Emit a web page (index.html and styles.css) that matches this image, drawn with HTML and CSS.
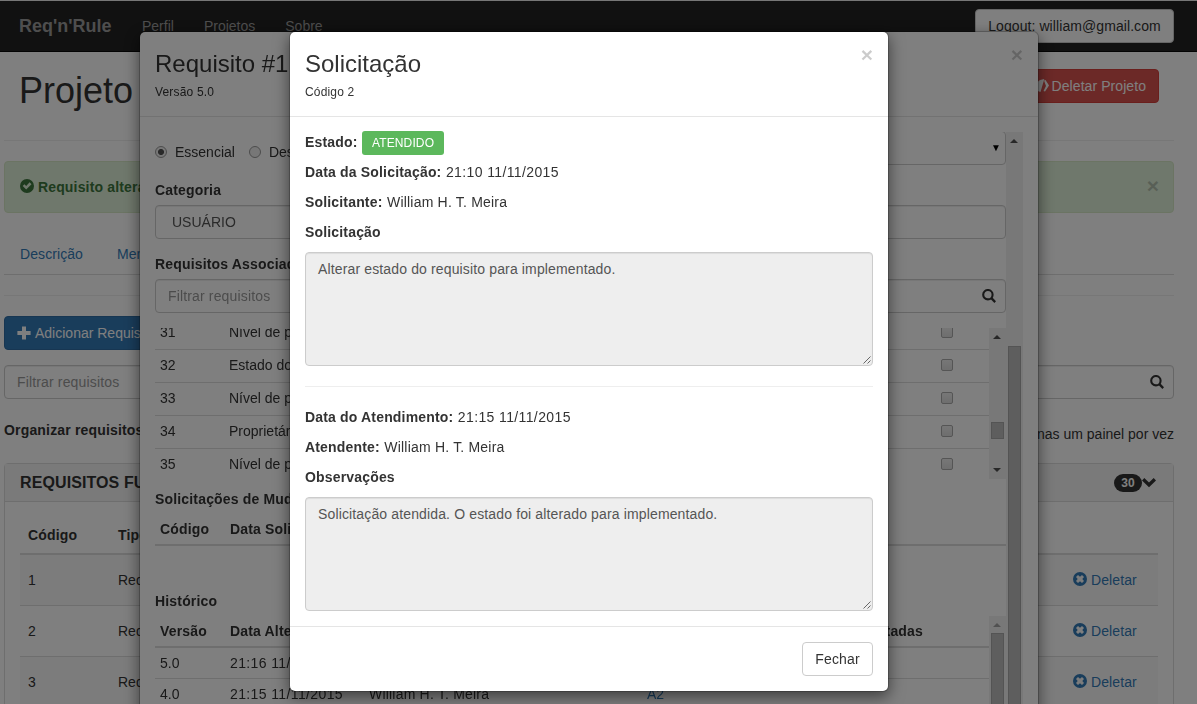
FILE: index.html
```html
<!DOCTYPE html>
<html lang="pt-BR">
<head>
<meta charset="utf-8">
<title>Req'n'Rule</title>
<link rel="stylesheet" href="styles.css">
</head>
<body>
<svg class="sprite" aria-hidden="true">
  <symbol id="ok" viewBox="0 0 14 14"><path fill-rule="evenodd" d="M7 0a7 7 0 1 0 0 14A7 7 0 0 0 7 0zM9.6 3.3 11.5 5.2 6.2 10.5 2.7 7.1 4.4 5.3 6.2 7z"/></symbol>
  <symbol id="plus" viewBox="0 0 14 14"><path d="M5 .5h4v4.600h4.600v3.900H9v4.500H5V9H.4V5.100H5z"/></symbol>
  <symbol id="search" viewBox="0 0 14 14"><circle cx="5.900" cy="5.700" r="4.700" fill="none" stroke="currentColor" stroke-width="2.100"/><path d="M8.300 9.700 10 8l4 4.200-1.600 1.700z"/></symbol>
  <symbol id="remove" viewBox="0 0 14 14"><path fill-rule="evenodd" d="M7 0a7 7 0 1 0 0 14A7 7 0 0 0 7 0zM5 3 7 4.700 9 3 11 5 9.300 7 11 9 9 11 7 9.300 5 11 3 9 4.700 7 3 5z"/></symbol>
  <symbol id="chevron" viewBox="0 0 14 14"><path d="M2.300 2 7 6.600 11.700 2 14 4.400 7 11.200 0 4.400z"/></symbol>
  <symbol id="trash" viewBox="0 0 14 14"><path d="M0 5 5 1 9.300 0 5.500 13 0 11z"/><path d="M9 1.500 10.500 1 14 6.500 10 12.500 8.500 12 11 7z"/></symbol>
</svg>

<div class="page">
  <nav class="navbar">
    <div class="container navbar-row">
      <a class="brand">Req'n'Rule</a>
      <a class="nav-link">Perfil</a>
      <a class="nav-link">Projetos</a>
      <a class="nav-link">Sobre</a>
      <a class="btn btn-default logout">Logout: william@gmail.com</a>
    </div>
  </nav>
  <div class="container">
    <header class="page-header">
      <h1>Projeto</h1>
      <a class="btn btn-danger"><svg class="icon"><use href="#trash"/></svg> Deletar Projeto</a>
    </header>
    <div class="alert"><span><svg class="icon"><use href="#ok"/></svg> <b>Requisito alterado</b></span><span class="close">×</span></div>
    <div class="tabs"><a class="tab-first">Descrição</a><a>Membros</a></div>
    <hr>
    <a class="btn btn-primary"><svg class="icon"><use href="#plus"/></svg> Adicionar Requisito</a>
    <div class="field filter"><span>Filtrar requisitos</span><svg class="icon"><use href="#search"/></svg></div>
    <div class="organize"><b>Organizar requisitos</b><span>Exibir apenas um painel por vez</span></div>
    <section class="panel">
      <div class="panel-heading"><b>REQUISITOS FUNCIONAIS</b><span class="panel-tools"><span class="badge">30</span><svg class="icon"><use href="#chevron"/></svg></span></div>
      <div class="panel-body">
        <div class="req-row req-head"><b>Código</b><b>Tipo</b></div>
        <div class="req-row odd"><span>1</span><span>Requisito</span><a><svg class="icon"><use href="#remove"/></svg> Deletar</a></div>
        <div class="req-row"><span>2</span><span>Requisito</span><a><svg class="icon"><use href="#remove"/></svg> Deletar</a></div>
        <div class="req-row odd"><span>3</span><span>Requisito</span><a><svg class="icon"><use href="#remove"/></svg> Deletar</a></div>
      </div>
    </section>
  </div>
</div>

<div class="modal modal-lg">
  <div class="modal-header"><span class="close">×</span><h4>Requisito #1</h4><small>Versão 5.0</small></div>
  <div class="scroll-area">
    <div class="form">
      <div class="first-row">
        <div class="radios"><i class="radio on"></i><span>Essencial</span><i class="radio"></i><span>Desejável</span></div>
        <div class="select">▼</div>
      </div>
      <b class="label category">Categoria</b>
      <div class="field user">USUÁRIO</div>
      <b class="label assoc">Requisitos Associados</b>
      <div class="field"><span>Filtrar requisitos</span><svg class="icon"><use href="#search"/></svg></div>
      <div class="assoc-box">
        <div class="assoc-list">
          <div class="assoc-row"><span>31</span><span>Nível de prioridade</span><i class="check"></i></div>
          <div class="assoc-row"><span>32</span><span>Estado do requisito</span><i class="check"></i></div>
          <div class="assoc-row"><span>33</span><span>Nível de prioridade</span><i class="check"></i></div>
          <div class="assoc-row"><span>34</span><span>Proprietário</span><i class="check"></i></div>
          <div class="assoc-row"><span>35</span><span>Nível de prioridade</span><i class="check"></i></div>
        </div>
        <div class="scrollbar"><i class="arrow up"></i><i class="thumb thumb-small"></i><i class="arrow down"></i></div>
      </div>
      <b class="label changes">Solicitações de Mudança</b>
      <div class="hist-row hist-head"><b>Código</b><b>Data Solicitação</b></div>
      <b class="label history">Histórico</b>
      <div class="hist-box">
        <div class="hist-list">
          <div class="hist-row hist-head"><b>Versão</b><b>Data Alteração</b><b>Autor</b><b class="end">Solicitações Acatadas</b></div>
          <div class="hist-row"><span>5.0</span><span class="date">21:16 11/11/2015</span></div>
          <div class="hist-row"><span>4.0</span><span class="date">21:15 11/11/2015</span><span class="name">William H. T. Meira</span><a>A2</a></div>
        </div>
        <div class="scrollbar"><i class="arrow up faded"></i><i class="thumb thumb-history"></i></div>
      </div>
    </div>
    <div class="scrollbar"><i class="arrow up"></i><i class="thumb thumb-main"></i></div>
  </div>
</div>

<div class="backdrop"></div>

<div class="modal modal-md">
  <div class="modal-header"><span class="close">×</span><h4>Solicitação</h4><small>Código 2</small></div>
  <div class="modal-body">
    <p><b>Estado:</b> <span class="status">ATENDIDO</span></p>
    <p><b>Data da Solicitação:</b> <span class="date">21:10 11/11/2015</span></p>
    <p><b>Solicitante:</b> <span class="name">William H. T. Meira</span></p>
    <p><b>Solicitação</b></p>
    <div class="textarea">Alterar estado do requisito para implementado.<svg class="grip" viewBox="0 0 8 8"><path d="M.5 7.500l7-7M4.500 7.500l3-3"/></svg></div>
    <hr>
    <p><b>Data do Atendimento:</b> <span class="date">21:15 11/11/2015</span></p>
    <p><b>Atendente:</b> <span class="name">William H. T. Meira</span></p>
    <p><b>Observações</b></p>
    <div class="textarea">Solicitação atendida. O estado foi alterado para implementado.<svg class="grip" viewBox="0 0 8 8"><path d="M.5 7.500l7-7M4.500 7.500l3-3"/></svg></div>
  </div>
  <div class="modal-footer"><a class="btn btn-default">Fechar</a></div>
</div>
</body>
</html>
```
FILE: styles.css
```css
* { box-sizing: border-box; }
html, body { height: 704px; margin: 0; overflow: hidden; }
body { font: 14px/20px "Liberation Sans", Arial, sans-serif; color: #333; background: #fff; }
a { color: #337ab7; }
h1, h4, p { margin: 0; font-weight: 400; }
hr { margin: 20px 0; border: 0; border-top: 1px solid #eee; }
b { letter-spacing: .17px; }
.date { letter-spacing: .38px; }
.name { letter-spacing: .2px; }
.sprite { display: none; }
.icon { width: 14px; height: 14px; fill: currentColor; vertical-align: -1px; flex: none; }
.page { height: 704px; overflow: hidden; }
.container { width: 1170px; margin-left: 4px; }

/* Navigation */
.navbar { height: 52px; border-top: 1px solid #eee; background: #222; border-bottom: 1px solid #080808; }
.navbar-row { display: flex; height: 50px; align-items: center; padding-left: 15px; }
.brand { width: 108px; font-size: 18px; font-weight: 700; color: #9d9d9d; }
.nav-link { color: #9d9d9d; margin-left: 15px; margin-right: 15px; }
.btn { display: inline-flex; align-items: center; justify-content: center; gap: 4px; height: 34px; padding: 0 12px; border: 1px solid #ccc; border-radius: 4px; white-space: nowrap; }
.btn-default { background: #fff; color: #333; }
.btn-danger { gap: 3px; letter-spacing: .07px; background: #d9534f; border-color: #d43f3a; color: #fff; }
.btn-primary { background: #337ab7; border-color: #2e6da4; color: #fff; }
.logout { margin-left: auto; width: 199px; letter-spacing: .08px; }

/* Project page */
.page-header { display: flex; justify-content: space-between; align-items: flex-start; height: 89px; padding: 17px 15px 0 15px; border-bottom: 1px solid #eee; }
h1 { font-size: 36px; line-height: 40px; margin-top: 2px; }
.alert { display: flex; justify-content: space-between; height: 52px; margin-top: 20px; padding: 15px 14px 15px 15px; border: 1px solid #d6e9c6; border-radius: 4px; background: #dff0d8; color: #3c763d; }
.close { font-size: 21px; line-height: 21px; font-weight: 700; color: #000; opacity: .2; }
.alert .close { line-height: 17px; }
.tabs { display: flex; gap: 34px; height: 62px; padding: 31px 16px 0; border-bottom: 1px solid #ddd; letter-spacing: .08px; }
.field { display: flex; align-items: center; justify-content: space-between; height: 34px; padding: 0 9px 0 12px; border: 1px solid #ccc; border-radius: 4px; background: #fff; box-shadow: inset 0 1px 1px rgba(0,0,0,.075); color: #999; letter-spacing: .15px; }
.field .icon { color: #333; }
.filter { margin-top: 15px; }
.organize { display: flex; justify-content: space-between; margin-top: 21px; height: 43px; }
.organize span { padding-top: 4px; }
.panel { height: 260px; border: 1px solid #ddd; border-radius: 4px 4px 0 0; }
.panel-heading { display: flex; justify-content: space-between; align-items: center; height: 38px; padding: 0 17px 0 15px; background: #f5f5f5; border-bottom: 1px solid #ddd; font-size: 16px; }
.panel-heading b { letter-spacing: .1px; }
.panel-tools { display: flex; align-items: center; }
.badge { width: 28px; height: 18px; border-radius: 9px; background: #333; color: #fff; font: 700 12px/18px "Liberation Sans", sans-serif; text-align: center; }
.panel-body { padding: 14px 15px 0; }
.req-row { display: grid; grid-template-columns: 90px 1fr 85px; align-items: center; height: 51px; padding-left: 8px; border-bottom: 1px solid #ddd; }
.req-row a { letter-spacing: .1px; }
.req-head { height: 39px; border-bottom-width: 2px; }
.odd { background: #f9f9f9; }

/* Dialogs */
.backdrop { position: fixed; inset: 0; background: rgba(0,0,0,.5); }
.modal { position: fixed; top: 31px; border: 1px solid rgba(0,0,0,.2); border-radius: 6px; background: #fff; background-clip: padding-box; box-shadow: 0 5px 15px rgba(0,0,0,.5); }
.modal-lg { left: 139px; width: 900px; height: 720px; }
.modal-md { left: 289px; width: 600px; }
.modal-header { height: 85px; padding: 15px; border-bottom: 1px solid #e5e5e5; }
.modal-header .close { float: right; margin-top: -3px; }
h4 { font-size: 24px; line-height: 34px; }
small { display: block; font-size: 12px; line-height: 22px; letter-spacing: .17px; }
.modal-body { padding: 15px; }
.modal-body p { height: 20px; margin-bottom: 10px; }
.modal-body hr { margin: 20px 0; }
.status { display: inline-block; height: 24px; margin: -3px 0 -3px; padding: 0 10px; border-radius: 3px; background: #5cb85c; color: #fff; font-size: 12px; line-height: 24px; vertical-align: middle; letter-spacing: .12px; }
.modal-body b + span { margin-left: .6px; }
.textarea { position: relative; height: 114px; padding: 6px 12px; border: 1px solid #ccc; border-radius: 4px; background: #eee; color: #555; letter-spacing: .14px; box-shadow: inset 0 1px 1px rgba(0,0,0,.075); }
.grip { position: absolute; right: 1px; bottom: 1px; width: 8px; height: 8px; fill: none; stroke: #444; stroke-width: .8; }
.modal-footer { display: flex; justify-content: flex-end; padding: 15px; border-top: 1px solid #e5e5e5; }
.modal-footer .btn { width: 71px; letter-spacing: .15px; }

/* Requirement form */
.scroll-area { display: flex; height: 587px; margin: 15px 15px 0; overflow: hidden; }
.form { flex: 1; }
.first-row { display: flex; justify-content: space-between; height: 33px; }
.radios { display: flex; align-items: center; padding-top: 7px; height: 33px; }
.radio { width: 12px; height: 12px; border: 1px solid #999; border-radius: 50%; background: #eee; }
.radios span { margin: 0 14px 0 8px; }
.radio.on { background: radial-gradient(circle, #555 0 2.7px, #eee 3.3px); }
.select { width: 400px; height: 34px; margin-top: -1px; padding: 6px 4px; border: 1px solid #ccc; border-radius: 4px; text-align: right; color: #000; font-size: 10px; }
.label { display: block; height: 20px; }
.category { margin: 15px 0 5px; }
.user { padding-left: 16px; color: #555; letter-spacing: 0; }
.assoc { margin: 15px 0 5px; }
.assoc-box { display: flex; height: 151px; margin-top: 15px; overflow: hidden; }
.assoc-list { flex: 1; margin-top: -11px; }
.assoc-row { display: grid; grid-template-columns: 69px 1fr 48px; align-items: center; height: 33px; padding: 0 0 2px 5px; border-bottom: 1px solid #ddd; }
.assoc-row:last-child { border-bottom-color: transparent; }
.check { width: 12px; height: 12px; border: 1px solid #aaa; border-radius: 2px; background: linear-gradient(#eee, #ddd); }
.changes { margin: 10px 0; }
.hist-row { display: grid; grid-template-columns: 70px 139px 278px 1fr; align-items: center; height: 31px; padding-left: 5px; border-bottom: 1px solid #ddd; }
.hist-head { height: 32px; border-bottom-width: 2px; }
.changes + .hist-head { height: 27px; padding-bottom: 8px; }
.history { margin: 45px 0 5px; }
.hist-box { display: flex; height: 150px; }
.hist-list { flex: 1; }
.hist-list .end { text-align: right; padding-right: 66px; white-space: nowrap; }
.scrollbar { position: relative; width: 17px; background: #f1f1f1; flex: none; }
.arrow { position: absolute; left: 4px; border: 4px solid transparent; border-top: 0; border-bottom-color: #505050; }
.up { top: 7px; }
.down { bottom: 7px; transform: rotate(180deg); }
.faded { border-bottom-color: #a3a3a3; }
.thumb { position: absolute; left: 2px; width: 13px; background: #bcbcbc; border: 1px solid #a8a8a8; }
.thumb-small { top: 94px; height: 17px; }
.thumb-main { top: 214px; bottom: 0; }
.thumb-history { top: 17px; bottom: 0; }
```
